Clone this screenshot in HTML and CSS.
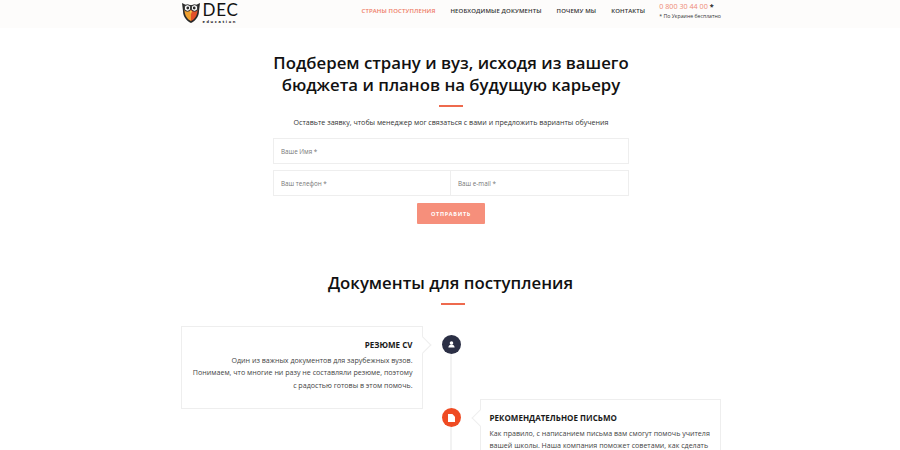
FILE: index.html
```html
<!DOCTYPE html>
<html lang="ru">

<head>
    <meta charset="UTF-8">
    <meta name="viewport" content="width=device-width, initial-scale=1.0">
    <link rel="stylesheet" href="styles.css">
    <title>DEC education</title>
</head>

<body>
    <header class="header">
        <div class="header_inner">
            <a class="logo" href="#">
                <svg class="logo_owl" width="20" height="21" viewBox="0 0 20 21">
                    <path d="M1 1 L5 3 H15 L19 1 L18 9 C18 15 14 19 10 21 C6 19 2 15 2 9 Z" fill="#2a2a2a"/>
                    <path d="M3.500 8 H10 V19 C6.500 17.500 3.500 13.500 3.500 8 Z" fill="#f0a030"/>
                    <path d="M10 8 H16.500 C16.500 13.500 13.500 17.500 10 19 Z" fill="#e2512a"/>
                    <circle cx="6.500" cy="6" r="3.300" fill="#fff" stroke="#2a2a2a"/>
                    <circle cx="13.500" cy="6" r="3.300" fill="#fff" stroke="#2a2a2a"/>
                    <circle cx="6.800" cy="6" r="1.400" fill="#2a2a2a"/>
                    <circle cx="13.200" cy="6" r="1.400" fill="#2a2a2a"/>
                    <path d="M9 9 H11 L10 12 Z" fill="#f6d04a"/>
                </svg>
                <span class="logo_text">
                    <span class="logo_dec">DEC</span>
                    <span class="logo_edu">education</span>
                </span>
            </a>
            <nav class="menu">
                <a class="menu_link menu_active" href="#">СТРАНЫ ПОСТУПЛЕНИЯ</a>
                <a class="menu_link" href="#">НЕОБХОДИМЫЕ ДОКУМЕНТЫ</a>
                <a class="menu_link" href="#">ПОЧЕМУ МЫ</a>
                <a class="menu_link" href="#">КОНТАКТЫ</a>
            </nav>
            <div class="phone">
                <div class="phone_num">0 800 30 44 00 <b class="phone_star">*</b></div>
                <div class="phone_note">* По Украине бесплатно</div>
            </div>
        </div>
    </header>

    <section class="request">
        <h1 class="title">Подберем страну и вуз, исходя из вашего<br>бюджета и планов на будущую карьеру</h1>
        <div class="dash"></div>
        <p class="request_text">Оставьте заявку, чтобы менеджер мог связаться с вами и предложить варианты обучения</p>
        <form class="form">
            <input class="input" type="text" placeholder="Ваше Имя *">
            <div class="form_row">
                <input class="input input_left" type="text" placeholder="Ваш телефон *">
                <input class="input input_right" type="text" placeholder="Ваш e-mail *">
            </div>
            <button class="button" type="button">ОТПРАВИТЬ</button>
        </form>
    </section>

    <section class="docs">
        <h2 class="title">Документы для поступления</h2>
        <div class="dash"></div>
        <div class="timeline">
            <div class="step">
                <div class="card card_left">
                    <h3 class="card_title">РЕЗЮМЕ CV</h3>
                    <p class="card_text">Один из важных документов для зарубежных вузов.<br>Понимаем, что многие ни разу не составляли резюме, поэтому<br>с радостью готовы в этом помочь.</p>
                </div>
                <div class="dot dot_dark">
                    <svg width="7" height="7" viewBox="0 0 9 9"><circle cx="4.500" cy="2.600" r="2.300" fill="#fff"/><path d="M0.500 8.500 C0.500 5.500 2.500 4.500 4.500 4.500 C6.500 4.500 8.500 5.500 8.500 8.500 Z" fill="#fff"/></svg>
                </div>
                <div></div>
            </div>
            <div class="step step_next">
                <div></div>
                <div class="dot dot_red">
                    <svg width="7" height="8" viewBox="0 0 8 9"><path d="M0 0 H5 L8 3 V9 H0 Z" fill="#fff"/></svg>
                </div>
                <div class="card card_right">
                    <h3 class="card_title">РЕКОМЕНДАТЕЛЬНОЕ ПИСЬМО</h3>
                    <p class="card_text">Как правило, с написанием письма вам смогут помочь учителя<br>вашей школы. Наша компания поможет советами, как сделать</p>
                </div>
            </div>
        </div>
    </section>
</body>

</html>
```

FILE: styles.css
```css
html,
body {
    height: 450px;
    overflow: hidden;
}

body {
    margin: 0;
    background-color: #fff;
    color: #111;
    font-family: "Open Sans", sans-serif;
}

.header {
    height: 28px;
    background-color: #fdfcfb;
}

.header_inner {
    width: 540px;
    margin: 0 auto;
    padding-left: 1px;
    display: flex;
    align-items: flex-start;
}

.logo {
    display: flex;
    gap: 2px;
    width: 181px;
    flex-shrink: 0;
    padding-top: 2px;
    color: #111;
    text-decoration: none;
}

.logo_text {
    display: flex;
    flex-direction: column;
}

.logo_dec {
    font-family: "Lato", sans-serif;
    font-size: 17px;
    line-height: 16px;
    letter-spacing: 0.8px;
}

.logo_edu {
    margin-top: 1px;
    font-size: 4px;
    font-weight: 700;
    line-height: 5px;
    letter-spacing: 1.6px;
}

.menu {
    display: flex;
    gap: 15px;
    padding-top: 7px;
    flex-shrink: 0;
}

.menu_link {
    color: #333;
    font-size: 6px;
    font-weight: 600;
    line-height: 9px;
    letter-spacing: 0.13px;
    text-decoration: none;
    white-space: nowrap;
}

.menu_active {
    color: #ee7a62;
}

.phone {
    margin-left: 14px;
    padding-top: 1px;
    white-space: nowrap;
}

.phone_num {
    color: #ee8a76;
    font-size: 7.200px;
    line-height: 11px;
}

.phone_star {
    color: #222;
}

.phone_note {
    color: #333;
    font-size: 5.200px;
    line-height: 9px;
}

.request {
    width: 356px;
    margin: 0 auto;
    padding: 24px 0 0 2px;
    text-align: center;
}

.title {
    margin: 0;
    font-size: 16.800px;
    font-weight: 600;
    line-height: 22px;
    color: #111;
    white-space: nowrap;
}

.dash {
    width: 24px;
    height: 2px;
    margin: 9px auto 0;
    background-color: #ee6a4e;
}

.request_text {
    margin: 8px 0 0;
    color: #333;
    font-size: 7.100px;
    line-height: 14px;
    white-space: nowrap;
}

.form {
    margin-top: 9px;
    display: flex;
    flex-direction: column;
    align-items: center;
}

.input {
    box-sizing: border-box;
    width: 100%;
    height: 26px;
    padding: 0 7px;
    border: 1px solid #eeeeee;
    background-color: #fff;
    font-family: "Open Sans", sans-serif;
    font-size: 6.300px;
    outline: none;
}

.input::placeholder {
    color: #777;
    opacity: 1;
}

.form_row {
    display: flex;
    width: 100%;
    margin-top: 6px;
}

.input_left {
    flex: 0 0 178px;
}

.input_right {
    flex: 1;
    border-left: 0;
}

.button {
    width: 68px;
    height: 21px;
    margin-top: 7px;
    border: 0;
    border-radius: 1px;
    background-color: #f68f7b;
    color: #fff;
    font-family: "Open Sans", sans-serif;
    font-size: 5.500px;
    font-weight: 700;
    letter-spacing: 0.7px;
}

.docs {
    width: 540px;
    margin: 0 auto;
    padding: 48px 0 0 1px;
    text-align: center;
}

.docs .dash {
    margin-left: 260px;
}

.timeline {
    margin-top: 21px;
    text-align: left;
}

.step {
    display: grid;
    grid-template-columns: 242px 57px 241px;
}

.step_next {
    margin-top: -10px;
}

.card {
    position: relative;
    box-sizing: border-box;
    border: 1px solid #eeeeee;
    background-color: #fff;
}

.card_left {
    height: 83px;
    padding: 10px 9px 0 0;
    text-align: right;
}

.card_right {
    min-height: 60px;
    padding: 10px 0 0 9px;
}

/* notch pointing at the timeline */
.card::after {
    content: "";
    position: absolute;
    top: 12px;
    width: 11px;
    height: 11px;
    background-color: #fff;
    border: 1px solid #eeeeee;
    transform: rotate(45deg);
}

.card_left::after {
    right: -7px;
    border-left: 0;
    border-bottom: 0;
}

.card_right::after {
    left: -7px;
    border-right: 0;
    border-top: 0;
}

.card_title {
    position: relative;
    z-index: 1;
    margin: 0 0 1px;
    font-size: 8px;
    font-weight: 700;
    line-height: 16px;
    color: #1a1a1a;
    letter-spacing: 0.02px;
}

.card_text {
    position: relative;
    z-index: 1;
    margin: 0;
    color: #444;
    font-size: 7.100px;
    line-height: 12.400px;
    white-space: nowrap;
}

.dot {
    position: relative;
    z-index: 1;
    display: flex;
    align-items: center;
    justify-content: center;
    width: 19px;
    height: 19px;
    margin: 9px 0 0 19px;
    border-radius: 50%;
}

.dot::after {
    content: "";
    position: absolute;
    z-index: -1;
    top: 19px;
    left: 8px;
    width: 2px;
    height: 60px;
    background-color: #f2f2f2;
}

.dot_dark {
    background-color: #2b2f45;
}

.dot_red {
    background-color: #ef4b23;
}
```
